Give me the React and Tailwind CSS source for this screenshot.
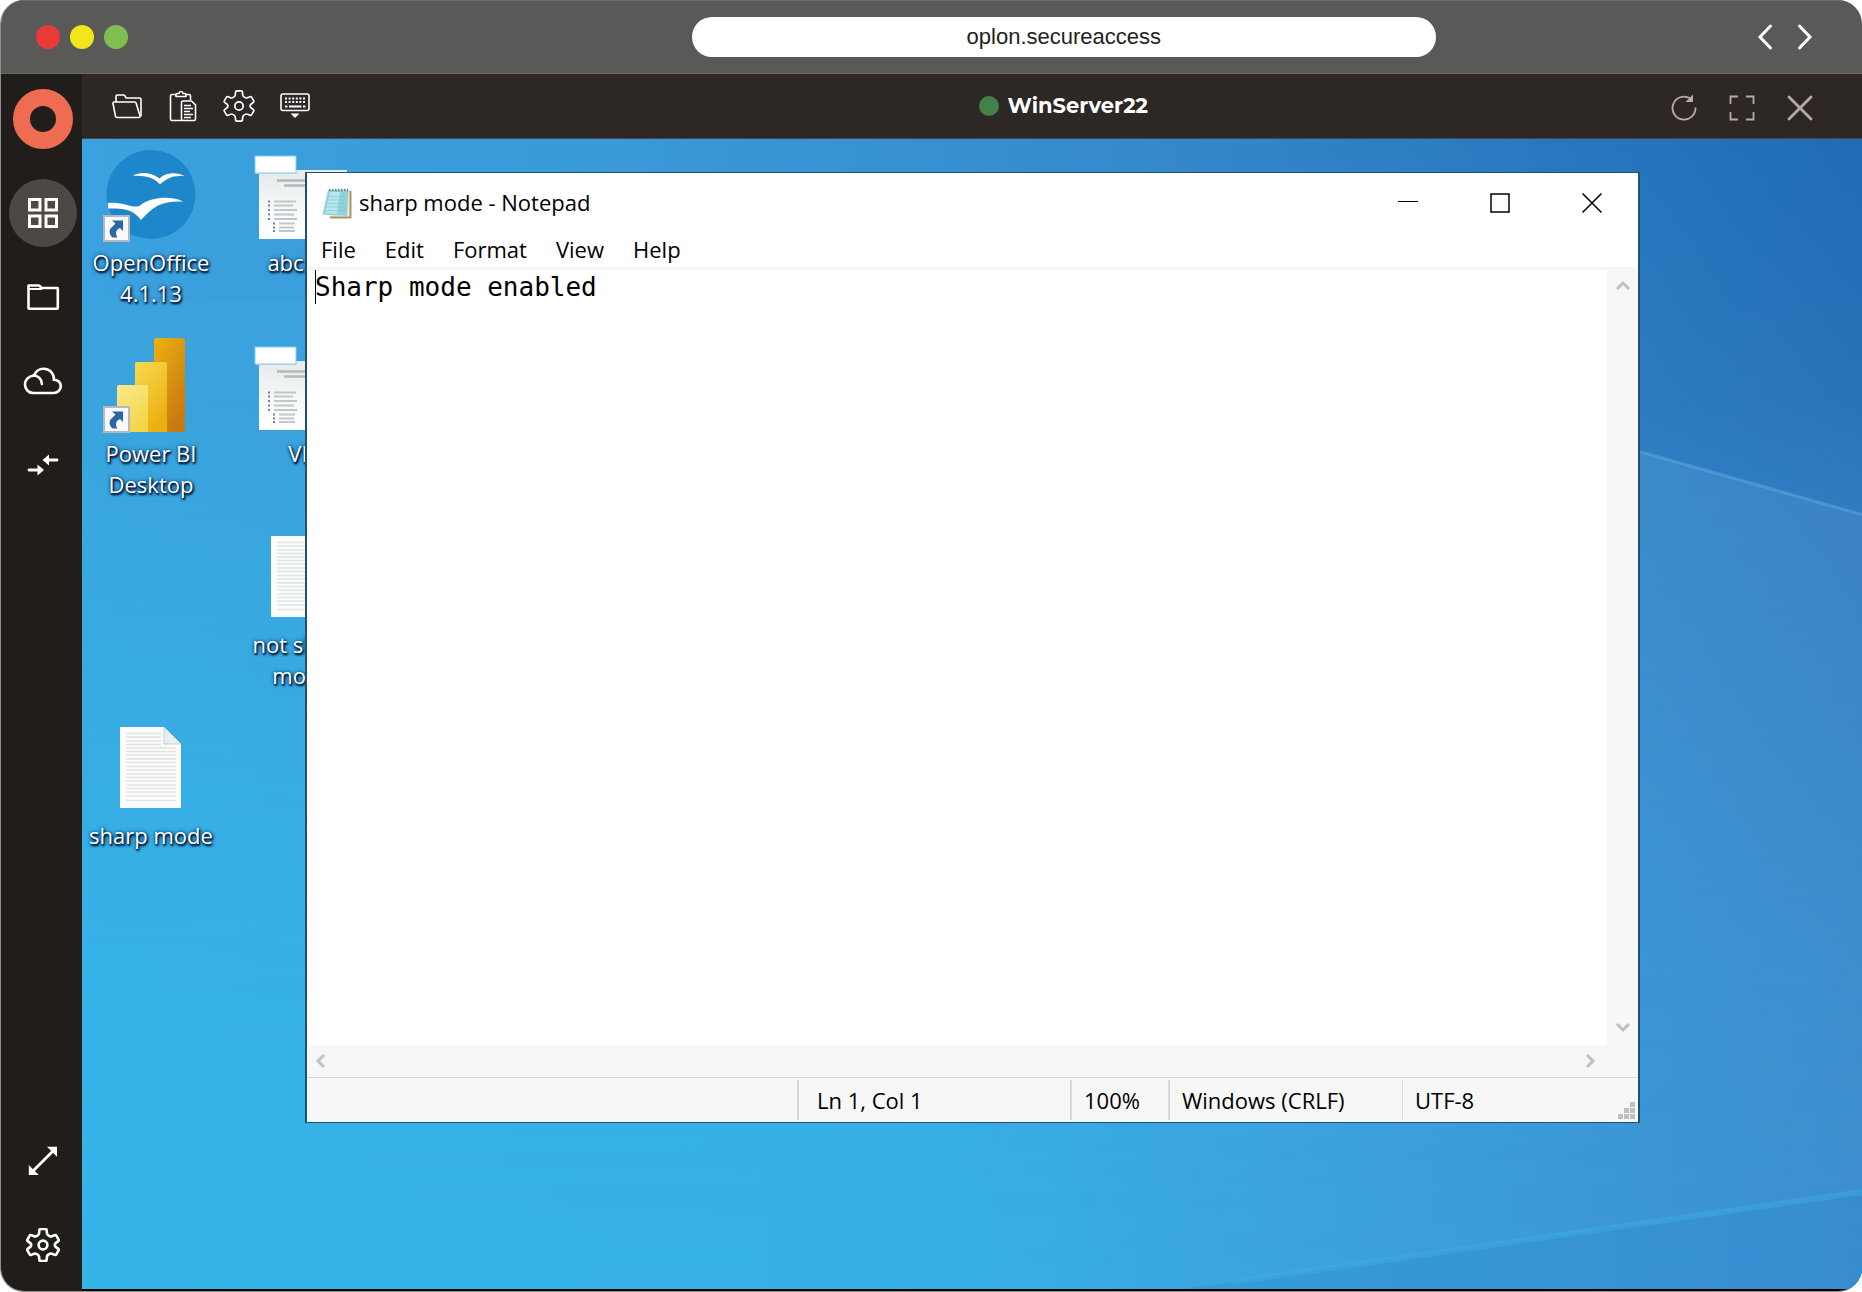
import { useState } from "react";

const ToolbarFolderIcon = () => (
  <svg width="32" height="32" viewBox="0 0 32 32" fill="none" stroke="#fff" strokeWidth="1.6" strokeLinejoin="round">
    <path d="M5 12V6.500Q5 5 6.500 5h6q1 0 1.500 1l.8 1.500q.3.5 1.200.5h12.500q1.500 0 1.500 1.500V26.500" />
    <path d="M2 13.500Q1.700 12 3.200 12h20.300q1.300 0 1.700 1.300L29 26q.3 1.500-1.200 1.500H6q-1.200 0-1.500-1.200z" />
  </svg>
);

const ClipboardIcon = () => (
  <svg width="32" height="32" viewBox="0 0 32 32" fill="none" stroke="#fff" strokeWidth="1.6" strokeLinejoin="round">
    <path d="M9 4.500H5q-1.500 0-1.500 1.500v23q0 1.500 1.500 1.500h10M19 4.500h3q1.500 0 1.500 1.500v4" />
    <path d="M9 6.500V4.800q0-1.300 1.300-1.300H12q.3-2 2-2t2 2h1.700Q19 3.500 19 4.800v1.700z" />
    <path d="M16 11h8.500L28.500 15v14q0 1.500-1.500 1.500H16q-1.500 0-1.500-1.500V12.500Q14.500 11 16 11z" />
    <path d="M17 15.500h7M17 18.500h9M17 21.500h6M17 24.500h9M17 27.500h7" />
  </svg>
);

const GearIcon = ({ size, stroke, hole }) => (
  <svg width={size} height={size} viewBox="0 0 34 34" fill="none" stroke="#fff" strokeWidth={stroke} strokeLinejoin="round">
    <path d="M14.500 1h5q1 0 1.100 1l.4 3.500q.2 1.200 1.300 1.800l1.400.8q1.100.7 2.200.2l2.900-1.200q1-.4 1.500.5l2.300 4q.5.9-.3 1.500l-2.600 2q-.9.700-.9 1.900t.9 1.900l2.600 2q.8.6.3 1.500l-2.300 4q-.5.9-1.500.5l-2.900-1.200q-1.100-.5-2.200.2l-1.400.8q-1.100.6-1.300 1.800l-.4 3.500q-.1 1-1.100 1h-5q-1 0-1.100-1l-.4-3.500q-.2-1.200-1.300-1.800l-1.400-.8q-1.100-.7-2.200-.2l-2.900 1.200q-1 .4-1.500-.5l-2.300-4q-.5-.9.3-1.500l2.600-2q.9-.7.9-1.900t-.9-1.900l-2.600-2q-.8-.6-.3-1.500l2.300-4q.5-.9 1.500-.5l2.900 1.200q1.100.5 2.200-.2l1.400-.8Q12.800 6.700 13 5.500L13.400 2q.1-1 1.100-1z" />
    <circle cx="17" cy="17" r={hole} />
  </svg>
);

const KeyboardIcon = () => (
  <svg width="32" height="32" viewBox="0 0 32 32" fill="none" stroke="#fff" strokeWidth="1.600">
    <rect x="2" y="4" width="28" height="16.500" rx="2" />
    <path d="M6 8.500h20M6 12h20" strokeDasharray="2 1.600" strokeWidth="1.800" />
    <path d="M6 16.500h2.500M10 16.500h12.500M24 16.500h2.500" strokeWidth="1.800" />
    <path d="M11.500 23.500h9L16 28z" fill="#fff" stroke="none" />
  </svg>
);

const RefreshIcon = () => (
  <svg width="28" height="28" viewBox="0 0 28 28" fill="none" stroke="#b9aca8" strokeWidth="1.800">
    <path d="M25.500 13.500A11.500 11.500 0 1 1 20 4.300" />
    <path d="M23 .5V8h-7.500z" fill="#b9aca8" stroke="none" />
  </svg>
);

const FullscreenIcon = () => (
  <svg width="28" height="28" viewBox="0 0 28 28" fill="none" stroke="#b9aca8" strokeWidth="1.800">
    <path d="M2.500 10V2.500H10M18 2.500h7.500V10M25.500 18v7.500H18M10 25.500H2.500V18" />
  </svg>
);

const CloseSessionIcon = () => (
  <svg width="28" height="28" viewBox="0 0 28 28" fill="none" stroke="#b9aca8" strokeWidth="2.800" strokeLinecap="round">
    <path d="M3 3l22 22M25 3L3 25" />
  </svg>
);

const AppsIcon = () => (
  <svg width="30" height="30" viewBox="0 0 30 30" fill="none" stroke="#fff" strokeWidth="3">
    <path d="M1.500 1.500h10.500v10.500H1.500zM18 1.500h10.500v10.500H18zM1.500 18h10.500v10.500H1.500zM18 18h10.500v10.500H18z" />
  </svg>
);

const FolderIcon = () => (
  <svg width="34" height="28" viewBox="0 0 34 28" fill="none" stroke="#fff" strokeWidth="2.600" strokeLinejoin="round">
    <path d="M2.500 25V2.500H13L16 5h15.500q.3 0 .3.500V25q0 .8-.8.8H3.200q-.7 0-.7-.8z" />
    <path d="M3 6h13" strokeWidth="2" />
  </svg>
);

const CloudIcon = () => (
  <svg width="40" height="28" viewBox="0 0 40 28" fill="none" stroke="#fff" strokeWidth="2.600" strokeLinecap="round">
    <path d="M10 26h20.500c4 0 7.300-2.900 7.300-6.800 0-3.700-3-6.500-6.900-6.500.3-6-4.200-11-10.200-11-4.500 0-8.100 2.700-9.600 6.800C5.700 8.800 2 12.800 2 17.400 2 22.200 5.500 26 10 26z" />
    <path d="M10.500 8.500c4.600 0 8.400 3.700 8.400 8.500" />
  </svg>
);

const TransferIcon = () => (
  <svg width="32" height="22" viewBox="0 0 32 22" fill="none" stroke="#fff" strokeWidth="2.800" strokeLinecap="round">
    <path d="M30 6H19M2 16h11" />
    <path d="M22 .5V11.500L15.500 6zM10.500 10.500V21.500L17 16z" fill="#fff" stroke="none" />
  </svg>
);

const ExpandIcon = () => (
  <svg width="30" height="30" viewBox="0 0 30 30" fill="#fff">
    <path d="M19 .8h10v10zM.8 19v10h10z" />
    <path d="M5 25L25 5" stroke="#fff" strokeWidth="2.800" />
  </svg>
);

const ShortcutBadge = ({ y }) => (
  <g transform={`translate(0 ${y})`}>
    <rect x="1" y="1" width="25" height="25" fill="#f8f9fb" stroke="#b5b8bd" strokeWidth="2" />
    <path d="M9 5.500h11v10.500l-3-3c-3.500 1.500-4.700 4-3.700 7l1 2.500H9.500C6 19 5.800 15.500 8 13l4.500-4.500z" fill="#2c64a4" />
  </g>
);

const OpenOfficeIcon = () => (
  <svg width="96" height="96" viewBox="0 0 96 96">
    <circle cx="48" cy="48.500" r="44.500" fill="#1e87cb" />
    <path d="M30 30c4-3 10-3.500 15-2.500 5 .8 8.500 2.800 11.500 5 4-4 8-5 13-5.300 5-.2 9 1 12 3-7-.6-12 0-16 2.300-3.500 1.800-6 3.500-8.500 6-2-2.500-4.500-4.500-8-6-5-2.200-11-3-19-2.500z" fill="#fff" />
    <path d="M5 57c9-.5 14 .5 20 2.300 4 1.200 8 1.700 11.500.7C42 55 49 53 57 52c9-.8 17 .2 23 3.500-10-.4-18 .3-25 4-7 3.800-11.500 8.500-17 14.500-4-5-8-8.300-14-10-6-1.500-12-1.700-19-1.500z" fill="#fff" />
    <ShortcutBadge y={69} />
  </svg>
);

const PowerBiIcon = () => (
  <svg width="96" height="96" viewBox="0 0 96 96">
    <defs>
      <linearGradient id="pbiBack" x1="0" y1="0" x2="0.600" y2="1">
        <stop offset="0" stopColor="#ecb20f" />
        <stop offset="1" stopColor="#c77a10" />
      </linearGradient>
      <linearGradient id="pbiMid" x1="0" y1="0" x2="0.500" y2="1">
        <stop offset="0" stopColor="#f7db52" />
        <stop offset="1" stopColor="#ebb010" />
      </linearGradient>
      <linearGradient id="pbiFront" x1="0" y1="0" x2="0.500" y2="1">
        <stop offset="0" stopColor="#fbea8c" />
        <stop offset="1" stopColor="#f3d54a" />
      </linearGradient>
    </defs>
    <rect x="51" y="1" width="31" height="94" rx="2" fill="url(#pbiBack)" />
    <path d="M34 25h28q2 0 2 2v68H32V27q0-2 2-2z" fill="url(#pbiMid)" />
    <path d="M16 48h27q2 0 2 2v45H14V50q0-2 2-2z" fill="url(#pbiFront)" />
    <ShortcutBadge y={69} />
  </svg>
);

const BatchFileIcon = () => (
  <svg width="96" height="96" viewBox="0 0 96 96">
    <defs>
      <linearGradient id="batchPage" x1="0" y1="0" x2="0" y2="1">
        <stop offset="0" stopColor="#e6eaea" />
        <stop offset="0.600" stopColor="#f8f9f9" />
        <stop offset="1" stopColor="#fff" />
      </linearGradient>
    </defs>
    <rect x="5" y="24" width="88" height="69" fill="url(#batchPage)" />
    <path d="M23 34.500h60M30 39.500h50" stroke="#b3b9bb" strokeWidth="2.500" />
    <path d="M20 55.500h22M20 59.500h19M20 64h23M20 68.500h20M20 73h23M25 77.500h16M25 81.500h15M25 85h16" stroke="#c1c6ca" strokeWidth="1.800" />
    <path d="M14 55.500h2M14 59.500h2M14 64h2M14 68.500h2M14 73h2M19 77.500h2M19 81.500h2M19 85h2" stroke="#76828a" strokeWidth="2" />
    <rect x="2" y="26" width="40" height="2" fill="#cfd4d6" />
    <rect x="1" y="10" width="41" height="17" fill="#fff" stroke="#7fd0f2" strokeWidth="1" />
  </svg>
);

const TextFileIcon = () => (
  <svg width="96" height="96" viewBox="0 0 96 96">
    <path d="M17 8h44l17 17v64H17z" fill="#fbfdfc" />
    <path
      d="M23 14.500h35M23 18h35M23 22h35M23 25.500h35M23 29h50M23 32.500h50M23 36h50M23 40h50M23 43.500h50M23 47.500h50M23 51h50M23 55h50M23 58.500h50M23 62h50M23 66h50M23 69.500h50M23 73h50M23 77h50M23 81.500h50"
      stroke="#e0e5e4"
      strokeWidth="1.600"
    />
    <path d="M61 8v17h17z" fill="#ebeeee" stroke="#c9cfd0" strokeWidth="1" />
  </svg>
);

const NotepadIcon = () => (
  <svg width="32" height="32" viewBox="0 0 32 32">
    <path d="M9 4h21.500v27.500H9z" fill="#a4976c" />
    <path d="M8 3h20.500v26.500H8z" fill="#efe9d2" />
    <path d="M7 3h20.500l-1.500 26L1.500 27.500z" fill="#8fd3dd" />
    <path d="M9 5h10L16 27l-12-1z" fill="#b9e6ec" />
    <path d="M7 9.500h19M6.500 13h19M6 16.500h19M5 20h20M4 23.500h21" stroke="#7cc4d0" strokeWidth="0.600" />
    <path d="M8 3h19" stroke="#6f8388" strokeWidth="2.500" strokeDasharray="1.500 1.500" />
  </svg>
);

const Chevron = ({ direction }) => {
  const paths = {
    up: "M2 11l6-6 6 6",
    down: "M2 5l6 6 6-6",
    left: "M11 2L5 8l6 6",
    right: "M5 2l6 6-6 6",
  };
  return (
    <svg width="16" height="16" viewBox="0 0 16 16" fill="none" stroke="#bfc2bf" strokeWidth="3">
      <path d={paths[direction]} />
    </svg>
  );
};

const Wallpaper = () => (
  <svg className="absolute inset-0 h-full w-full" viewBox="0 0 1780 1151" preserveAspectRatio="none">
    <defs>
      <linearGradient id="sky" x1="0" y1="0" x2="1" y2="0">
        <stop offset="0" stopColor="#3aa2de" />
        <stop offset="0.300" stopColor="#3a9ad8" />
        <stop offset="0.620" stopColor="#3488ca" />
        <stop offset="0.850" stopColor="#2676bd" />
        <stop offset="1" stopColor="#216bb5" />
      </linearGradient>
      <linearGradient id="beam" x1="0" y1="0" x2="1" y2="0">
        <stop offset="0" stopColor="#3aa4de" />
        <stop offset="0.600" stopColor="#3c9ad8" />
        <stop offset="0.880" stopColor="#3d89ca" />
        <stop offset="1" stopColor="#3d80c4" />
      </linearGradient>
      <linearGradient id="floor" x1="0" y1="0" x2="1" y2="0">
        <stop offset="0" stopColor="#35b4e8" />
        <stop offset="0.450" stopColor="#36b1e6" />
        <stop offset="0.700" stopColor="#3ba2dd" />
        <stop offset="0.900" stopColor="#3c95d5" />
        <stop offset="1" stopColor="#3d8fd0" />
      </linearGradient>
      <linearGradient id="fadeDown" x1="0" y1="0" x2="0" y2="1">
        <stop offset="0" stopColor="#fff" stopOpacity="0" />
        <stop offset="0.650" stopColor="#fff" stopOpacity="0.900" />
        <stop offset="1" stopColor="#fff" stopOpacity="1" />
      </linearGradient>
      <linearGradient id="haze" x1="0" y1="0" x2="0" y2="1">
        <stop offset="0" stopColor="#4a8fce" stopOpacity="0" />
        <stop offset="1" stopColor="#4a8fce" stopOpacity="0.300" />
      </linearGradient>
      <mask id="floorMask">
        <rect y="250" width="1780" height="901" fill="url(#fadeDown)" />
      </mask>
    </defs>
    <rect width="1780" height="1151" fill="url(#sky)" />
    <path d="M1200 0h580v376L1200 210z" fill="url(#haze)" />
    <path d="M0 160L900 160 1558 313 1780 376V1151H0z" fill="url(#beam)" opacity="0.950" />
    <rect y="250" width="1780" height="901" fill="url(#floor)" mask="url(#floorMask)" />
    <path d="M1100 1151L1380 1111 1780 1054V1151z" fill="#2f8acd" opacity="0.350" />
    <path d="M1558 313L1780 376" stroke="#5aa3dd" strokeWidth="3" opacity="0.600" />
    <path d="M1150 1144L1380 1111 1780 1054" stroke="#41ade4" strokeWidth="6" fill="none" opacity="0.450" />
  </svg>
);

const navItems = [
  { name: "Applications", icon: <AppsIcon /> },
  { name: "Files", icon: <FolderIcon /> },
  { name: "Cloud", icon: <CloudIcon /> },
  { name: "Transfers", icon: <TransferIcon /> },
];

const desktopIcons = [
  { label: "OpenOffice 4.1.13", icon: <OpenOfficeIcon />, cell: "col-start-1 row-start-1" },
  { label: "Power BI Desktop", icon: <PowerBiIcon />, cell: "col-start-1 row-start-2" },
  { label: "sharp mode", icon: <TextFileIcon />, cell: "col-start-1 row-start-4" },
  { label: "abc.txt", icon: <BatchFileIcon />, cell: "col-start-2 row-start-1" },
  { label: "VB", icon: <BatchFileIcon />, cell: "col-start-2 row-start-2" },
  { label: "not sharp mode", icon: <TextFileIcon />, cell: "col-start-2 row-start-3" },
];

const BrowserBar = () => (
  <header className="flex h-[74px] shrink-0 items-center border-t border-b border-t-[#6b6b70] border-b-[#6d6664] bg-[#595957]">
    <div className="flex flex-1 gap-[10px] pl-[35px]">
      <span className="size-6 rounded-full bg-[#e93b37]" />
      <span className="size-6 rounded-full bg-[#f1e61b]" />
      <span className="size-6 rounded-full bg-[#80be51]" />
    </div>
    <input
      type="text"
      aria-label="Address"
      defaultValue="oplon.secureaccess"
      className="h-10 w-2/5 rounded-full bg-white text-center font-['Liberation_Sans',sans-serif] text-[22px] text-[#231f20] outline-none"
    />
    <div className="flex w-[426px] justify-end gap-3 pr-[43px]">
      <button aria-label="Back" className="flex size-7 items-center justify-center">
        <svg width="16" height="28" viewBox="0 0 16 28" fill="none" stroke="#fff" strokeWidth="3" strokeLinecap="round">
          <path d="M13.500 3L3 14l10.500 11" />
        </svg>
      </button>
      <button aria-label="Forward" className="flex size-7 items-center justify-center">
        <svg width="16" height="28" viewBox="0 0 16 28" fill="none" stroke="#fff" strokeWidth="3" strokeLinecap="round">
          <path d="M2.500 3L13 14 2.500 25" />
        </svg>
      </button>
    </div>
  </header>
);

const Sidebar = ({ active, onSelect }) => (
  <aside className="flex w-[81px] shrink-0 flex-col items-center bg-[#211d1a] pt-[15px] pb-3 pl-[3px]">
    <svg width="60" height="60" viewBox="0 0 60 60" fill="none">
      <circle cx="30" cy="30" r="21.500" stroke="#ee6d52" strokeWidth="17" />
    </svg>
    <nav className="mt-[30px] flex flex-1 flex-col gap-4">
      {navItems.map((item) => (
        <button
          key={item.name}
          aria-label={item.name}
          onClick={() => onSelect(item.name)}
          className={`flex size-[68px] items-center justify-center rounded-full ${
            active === item.name ? "bg-[#4d4845]" : ""
          }`}
        >
          {item.icon}
        </button>
      ))}
      <button aria-label="Expand" className="mt-auto flex size-[68px] items-center justify-center">
        <ExpandIcon />
      </button>
      <button aria-label="Settings" className="flex size-[68px] items-center justify-center">
        <GearIcon size={34} stroke={2.6} hole={4.4} />
      </button>
    </nav>
  </aside>
);

const SessionToolbar = () => (
  <div className="flex h-[65px] shrink-0 items-center border-b border-[#4a4443] bg-[#2d2725]">
    <div className="flex flex-1 gap-6 pl-[29px]">
      <button aria-label="Files" className="flex size-8 items-center justify-center">
        <ToolbarFolderIcon />
      </button>
      <button aria-label="Clipboard" className="flex size-8 items-center justify-center">
        <ClipboardIcon />
      </button>
      <button aria-label="Session settings" className="flex size-8 items-center justify-center">
        <GearIcon size={34} stroke={1.8} hole={4.4} />
      </button>
      <button aria-label="Keyboard" className="flex size-8 items-center justify-center">
        <KeyboardIcon />
      </button>
    </div>
    <div className="flex items-center gap-2">
      <span className="size-5 rounded-full bg-[#43804a]" />
      <span className="font-['Montserrat','Inter',sans-serif] text-[21px] font-bold text-white">WinServer22</span>
    </div>
    <div className="flex w-[714px] justify-end gap-[30px] pt-1 pr-12">
      <button aria-label="Reload" className="size-7">
        <RefreshIcon />
      </button>
      <button aria-label="Full screen" className="size-7">
        <FullscreenIcon />
      </button>
      <button aria-label="Disconnect" className="size-7">
        <CloseSessionIcon />
      </button>
    </div>
  </div>
);

const DesktopIcon = ({ label, icon, cell }) => (
  <button className={`flex flex-col items-center gap-[5px] ${cell}`}>
    {icon}
    <span className="w-full text-center text-[22px] leading-[31px] text-white [text-shadow:1px_2px_2px_rgb(0_20_50),1px_1px_3px_rgb(0_30_70),0_0_4px_rgb(0_70_130)]">
      {label}
    </span>
  </button>
);

const NotepadWindow = () => {
  const [text, setText] = useState("Sharp mode enabled");

  return (
    <section className="absolute top-[33px] right-[222px] bottom-[166px] left-[223px] flex flex-col border-2 border-t border-b border-[#1f5270] bg-white text-[22px] text-black">
      <div className="flex h-[59px] shrink-0 items-center pl-[14px]">
        <NotepadIcon />
        <h1 className="flex-1 pl-[6px]">sharp mode - Notepad</h1>
        <button aria-label="Minimize" className="flex h-full w-[92px] items-center justify-center">
          <svg width="20" height="20" viewBox="0 0 20 20" stroke="#000">
            <path d="M0 8.500h20" />
          </svg>
        </button>
        <button aria-label="Maximize" className="flex h-full w-[92px] items-center justify-center">
          <svg width="20" height="20" viewBox="0 0 20 20" fill="none" stroke="#000" strokeWidth="1.500">
            <rect x="1" y="1" width="18" height="18" />
          </svg>
        </button>
        <button aria-label="Close" className="flex h-full w-[92px] items-center justify-center">
          <svg width="20" height="20" viewBox="0 0 20 20" stroke="#000" strokeWidth="1.500">
            <path d="M.5.5l19 19M19.500.5l-19 19" />
          </svg>
        </button>
      </div>

      <div className="flex h-[35px] shrink-0 items-center gap-[29px] pl-[14px]">
        <button>File</button>
        <button>Edit</button>
        <button>Format</button>
        <button>View</button>
        <button>Help</button>
      </div>

      <div className="flex flex-1 border-t-3 border-[#f7f7f7]">
        <div className="relative flex flex-1">
          <textarea
            aria-label="Document"
            value={text}
            onChange={(e) => setText(e.target.value)}
            spellCheck={false}
            className="flex-1 resize-none pl-2 font-['DejaVu_Sans_Mono',monospace] text-[26px] leading-[34px] outline-none"
          />
          <span className="absolute top-0 left-2 h-[34px] w-px bg-black" />
        </div>
        <div className="flex w-[31px] flex-col items-center justify-between bg-[#f7f7f7] pt-2 pb-[10px]">
          <Chevron direction="up" />
          <Chevron direction="down" />
        </div>
      </div>

      <div className="flex h-8 shrink-0 items-center justify-between bg-[#f7f7f7] pr-10 pl-[6px]">
        <Chevron direction="left" />
        <Chevron direction="right" />
      </div>

      <footer className="relative flex h-[45px] shrink-0 border-t border-[#d9d9d9] bg-[#f7f7f7] py-[2px] leading-10">
        <span className="flex-1" />
        <span className="w-[273px] border-l-2 border-[#d9d9d9] pl-[18px]">Ln 1, Col 1</span>
        <span className="w-[98px] border-l-2 border-[#d9d9d9] pl-3">100%</span>
        <span className="w-[234px] border-l-2 border-[#d9d9d9] pl-3">Windows (CRLF)</span>
        <span className="w-[236px] border-l border-[#d9d9d9] pl-3">UTF-8</span>
        <svg className="absolute right-[2px] bottom-[2px]" width="18" height="18" viewBox="0 0 18 18" fill="#bfc0bf">
          <path d="M12 0h5v5h-5zM6 6h5v5H6zM12 6h5v5h-5zM0 12h5v5H0zM6 12h5v5H6zM12 12h5v5h-5z" />
        </svg>
      </footer>
    </section>
  );
};

const App = () => {
  const [active, setActive] = useState("Applications");

  return (
    <div className="h-screen bg-white">
      <div className="flex h-full flex-col overflow-hidden rounded-3xl border-b border-l border-[#8f8d8b] font-['Open_Sans',sans-serif]">
        <BrowserBar />
        <div className="flex min-h-0 flex-1">
          <Sidebar active={active} onSelect={setActive} />
          <div className="flex flex-1 flex-col">
            <SessionToolbar />
            <main className="relative flex-1 overflow-hidden border-b-2 border-black bg-[#36b0e6]">
              <Wallpaper />
              <div className="relative grid w-max auto-rows-[191px] grid-cols-[138px_138px] gap-x-[13px] pt-[7px]">
                {desktopIcons.map((item) => (
                  <DesktopIcon key={item.label} {...item} />
                ))}
              </div>
              <NotepadWindow />
            </main>
          </div>
        </div>
      </div>
    </div>
  );
};

export default App;
